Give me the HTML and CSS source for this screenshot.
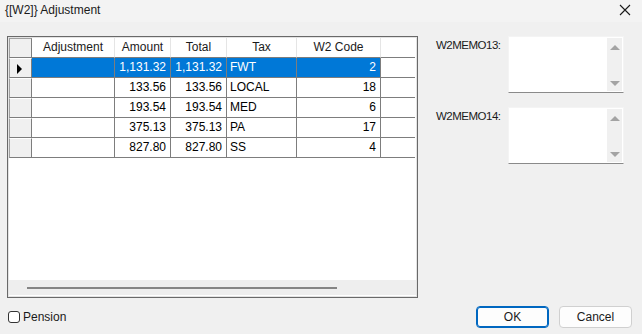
FILE: index.html
```html
<!DOCTYPE html>
<html lang="en">
<head>
    <meta charset="UTF-8">
    <title>{[W2]} Adjustment</title>
    <link rel="stylesheet" href="styles.css">
</head>
<body>
    <div class="window">
        <div class="titlebar">
            <span class="title">{[W2]} Adjustment</span>
            <svg class="close" width="12" height="12" viewBox="0 0 12 12">
                <path d="M1 1 L11 11 M11 1 L1 11" stroke="#1a1a1a" stroke-width="1.1"/>
            </svg>
        </div>

        <div class="content">
            <div class="grid">
                <div class="grid-inner">
                    <div class="row head">
                        <div class="rh"></div>
                        <div class="c adj">Adjustment</div>
                        <div class="c amt">Amount</div>
                        <div class="c tot">Total</div>
                        <div class="c tax">Tax</div>
                        <div class="c code">W2 Code</div>
                        <div class="c fill"></div>
                    </div>
                    <div class="row sel">
                        <div class="rh"><span class="arrow"></span></div>
                        <div class="c adj"></div>
                        <div class="c amt num">1,131.32</div>
                        <div class="c tot num">1,131.32</div>
                        <div class="c tax txt">FWT</div>
                        <div class="c code num">2</div>
                        <div class="c fill"></div>
                    </div>
                    <div class="row">
                        <div class="rh"></div>
                        <div class="c adj"></div>
                        <div class="c amt num">133.56</div>
                        <div class="c tot num">133.56</div>
                        <div class="c tax txt">LOCAL</div>
                        <div class="c code num">18</div>
                        <div class="c fill"></div>
                    </div>
                    <div class="row">
                        <div class="rh"></div>
                        <div class="c adj"></div>
                        <div class="c amt num">193.54</div>
                        <div class="c tot num">193.54</div>
                        <div class="c tax txt">MED</div>
                        <div class="c code num">6</div>
                        <div class="c fill"></div>
                    </div>
                    <div class="row">
                        <div class="rh"></div>
                        <div class="c adj"></div>
                        <div class="c amt num">375.13</div>
                        <div class="c tot num">375.13</div>
                        <div class="c tax txt">PA</div>
                        <div class="c code num">17</div>
                        <div class="c fill"></div>
                    </div>
                    <div class="row">
                        <div class="rh"></div>
                        <div class="c adj"></div>
                        <div class="c amt num">827.80</div>
                        <div class="c tot num">827.80</div>
                        <div class="c tax txt">SS</div>
                        <div class="c code num">4</div>
                        <div class="c fill"></div>
                    </div>
                    <div class="grid-space"></div>
                    <div class="hscroll"><div class="thumb"></div></div>
                </div>
            </div>

            <div class="memos">
                <div class="memo">
                    <label class="memo-label">W2MEMO13:</label>
                    <div class="memo-box">
                        <div class="memo-text"></div>
                        <div class="vscroll">
                            <span class="up"></span>
                            <span class="down"></span>
                        </div>
                    </div>
                </div>
                <div class="memo">
                    <label class="memo-label">W2MEMO14:</label>
                    <div class="memo-box">
                        <div class="memo-text"></div>
                        <div class="vscroll">
                            <span class="up"></span>
                            <span class="down"></span>
                        </div>
                    </div>
                </div>
            </div>
        </div>

        <div class="footer">
            <label class="check"><span class="box"></span>Pension</label>
            <div class="buttons">
                <button class="btn primary">OK</button>
                <button class="btn">Cancel</button>
            </div>
        </div>
    </div>
</body>
</html>
```

FILE: styles.css
```css
html, body {
    margin: 0;
    padding: 0;
}
body {
    font-family: 'Liberation Sans', Arial, sans-serif;
    font-size: 12px;
    color: #000;
    background: #f0f0f0;
}
.window {
    width: 642px;
    height: 334px;
    background: #f0f0f0;
    overflow: hidden;
}
.titlebar {
    height: 22px;
    background: #f3f3f3;
    display: flex;
    align-items: center;
    justify-content: space-between;
    padding: 0 11px 3px 5px;
    box-sizing: border-box;
}
.title {
    color: #1a1a1a;
}
.content {
    display: flex;
    padding: 14px 0 0 7px;
}
.grid {
    width: 411px;
    height: 262px;
    border: 1px solid #696969;
    box-sizing: border-box;
    background: #fff;
}
.grid-inner {
    height: 100%;
    border: 1px solid #e3e3e3;
    box-sizing: border-box;
    display: flex;
    flex-direction: column;
}
.row {
    display: flex;
    height: 20px;
    flex: none;
}
.row .c, .row .rh {
    height: 20px;
    box-sizing: border-box;
    border-right: 1px solid #7d7d7d;
    border-bottom: 1px solid #7d7d7d;
    line-height: 19px;
    white-space: nowrap;
    overflow: hidden;
}
.rh {
    width: 23px;
    background: #f0f0f0;
    border-left: 1px solid #a0a0a0;
    border-top: 1px solid #fff;
    position: relative;
}
.adj { width: 83px; }
.amt { width: 56px; }
.tot { width: 56px; }
.tax { width: 70px; }
.code { width: 84px; }
.fill { width: 34px; }
.row .c.fill { border-right: none; }
.head .c {
    text-align: center;
    background: #fff;
    border-right-color: #e5e5e5;
    border-bottom-color: #7d7d7d;
    color: #1a1a1a;
}
.head .rh {
    border-top: 1px solid #a0a0a0;
}
.num {
    text-align: right;
    padding-right: 4px;
}
.txt {
    padding-left: 3px;
}
.sel .c {
    background: #0078d7;
    color: #fff;
}
.sel .c.fill {
    background: #fff;
}
.arrow {
    position: absolute;
    left: 7px;
    top: 5px;
    border-left: 5px solid #000;
    border-top: 5px solid transparent;
    border-bottom: 5px solid transparent;
}
.grid-space {
    flex: 1;
}
.hscroll {
    height: 15px;
    background: #eeeeee;
    flex: none;
    margin-bottom: 1px;
}
.thumb {
    margin: 7px 0 0 18px;
    width: 310px;
    height: 2px;
    background: #858585;
}

.memos {
    margin-left: 18px;
    display: flex;
    flex-direction: column;
    gap: 14px;
}
.memo {
    display: flex;
}
.memo-label {
    width: 72px;
    padding-top: 3px;
    font-size: 11.5px;
    letter-spacing: -0.5px;
    color: #1a1a1a;
}
.memo-box {
    width: 116px;
    height: 57px;
    background: #fff;
    border: 1px solid #f4f4f4;
    border-bottom: 1px solid #8a8a8a;
    box-sizing: border-box;
    display: flex;
}
.memo-text {
    flex: 1;
}
.vscroll {
    width: 15px;
    background: #f0f0f0;
    margin: 1px 1px 1px 0;
    display: flex;
    flex-direction: column;
    justify-content: space-between;
    align-items: center;
    padding: 7px 0 5px;
    box-sizing: border-box;
}
.up {
    border-bottom: 5px solid #a3a3a3;
    border-left: 5px solid transparent;
    border-right: 5px solid transparent;
}
.down {
    border-top: 5px solid #a3a3a3;
    border-left: 5px solid transparent;
    border-right: 5px solid transparent;
}

.footer {
    display: flex;
    align-items: center;
    justify-content: space-between;
    padding: 8px 10px 0 8px;
}
.check {
    display: flex;
    align-items: center;
    gap: 3px;
    color: #1a1a1a;
}
.box {
    width: 12px;
    height: 12px;
    border: 1px solid #333;
    border-radius: 3px;
    box-sizing: border-box;
    background: #fff;
}
.buttons {
    display: flex;
    gap: 10px;
}
.btn {
    width: 73px;
    height: 22px;
    font-family: 'Liberation Sans', Arial, sans-serif;
    font-size: 12px;
    color: #1a1a1a;
    background: #fdfdfd;
    border: 1px solid #d0d0d0;
    border-radius: 4px;
    padding: 0;
}
.btn.primary {
    border: 1px solid #0067c0;
    box-shadow: inset 0 0 0 1px #0067c0;
}
```
